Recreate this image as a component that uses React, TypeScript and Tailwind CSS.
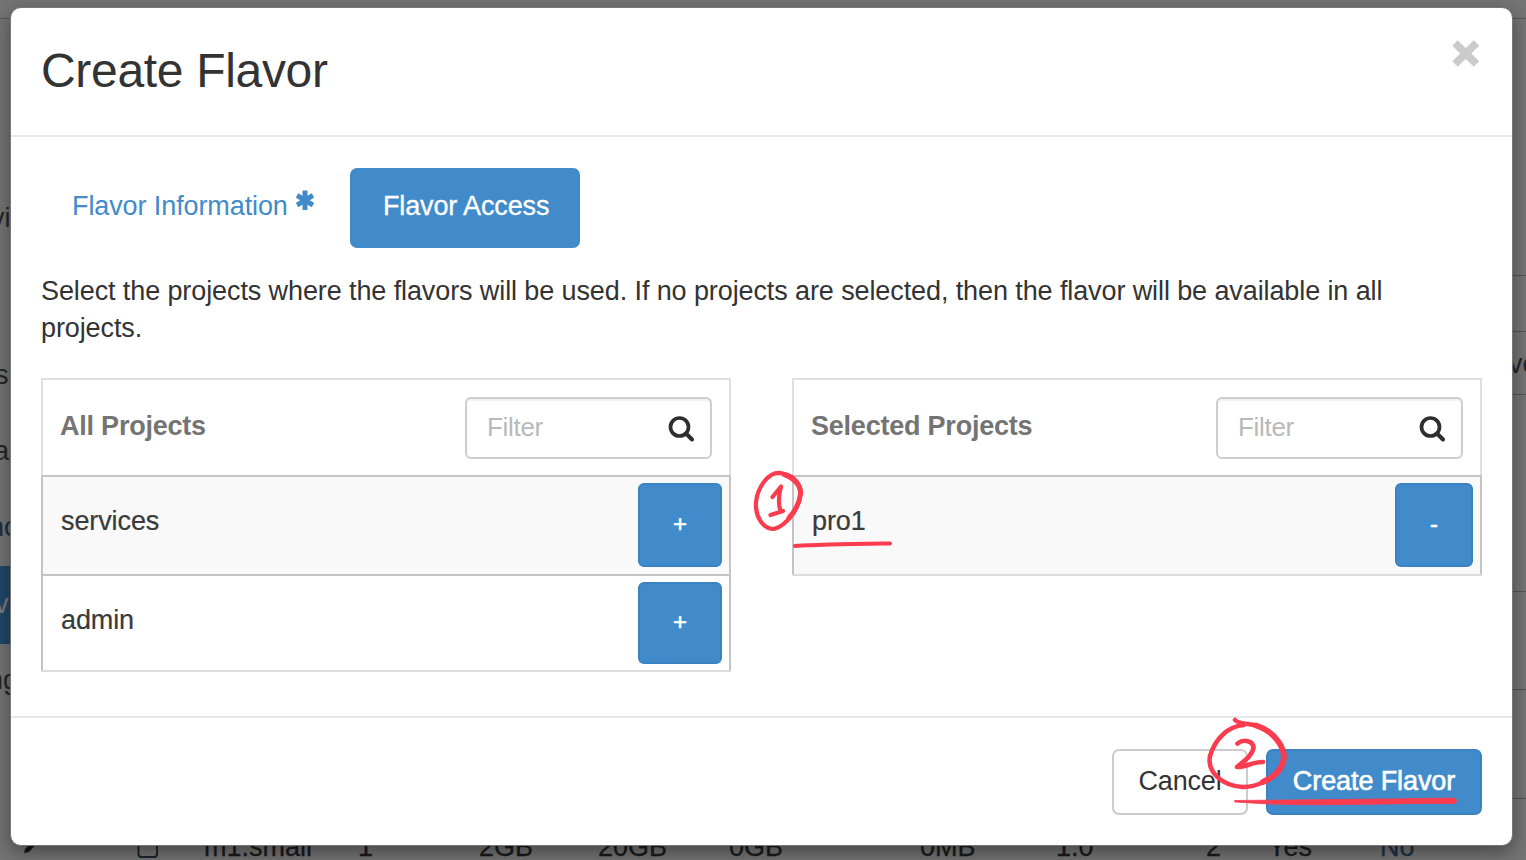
import { ReactNode } from "react";

const sideLabels = [
  { top: 200, left: -9, text: "vi", cls: "text-[#262626]" },
  { top: 357, left: -5, text: "s", cls: "text-[#262626]" },
  { top: 433, left: -6, text: "a", cls: "text-[#262626]" },
  { top: 509, left: -11, text: "nc", cls: "text-[#1c2f42]" },
  { top: 586, left: -5, text: "v", cls: "text-[#808080]" },
  { top: 662, left: -12, text: "ng", cls: "text-[#262626]" },
];

const tableCells = [
  { left: 204, text: "m1.small" },
  { left: 358, text: "1" },
  { left: 479, text: "2GB" },
  { left: 598, text: "20GB" },
  { left: 729, text: "0GB" },
  { left: 920, text: "0MB" },
  { left: 1056, text: "1.0" },
  { left: 1206, text: "2" },
  { left: 1268, text: "Yes" },
];

const ruleTops = [275, 331, 394, 591, 689, 798];

function Backdrop() {
  return (
    <div className="absolute inset-0 overflow-hidden bg-[#757575]" aria-hidden="true">
      <div className="absolute left-0 top-[18px] h-px w-full bg-[#595959]" />
      <div className="absolute left-0 top-[566px] h-[78px] w-3 bg-[#22486a]" />
      {ruleTops.map((top) => (
        <div key={top} className="absolute left-[1500px] h-px w-[26px] bg-[#555]" style={{ top }} />
      ))}
      {sideLabels.map((l) => (
        <div key={l.top} className={`absolute w-max text-[27px] leading-[37px] ${l.cls}`} style={{ top: l.top, left: l.left }}>
          {l.text}
        </div>
      ))}
      <div className="absolute left-[1509px] top-[346px] text-[27px] leading-[37px] text-[#262626]">vo</div>
      <svg className="absolute left-[20px] top-[840px]" width="150" height="20" viewBox="0 0 150 20">
        <path d="M4 13 L5 9 L14 0 L18 2 L9 12 Z" fill="#161616" />
        <rect x="118.500" y="-4" width="18.500" height="21" rx="3" fill="none" stroke="#1c2530" strokeWidth="2" />
      </svg>
      {tableCells.map((c) => (
        <div key={c.left} className="absolute top-[829px] text-[27px] leading-[37px] text-[#1b1b1b] [-webkit-text-stroke:0.3px]" style={{ left: c.left }}>
          {c.text}
        </div>
      ))}
      <div className="absolute left-[1380px] top-[829px] text-[27px] leading-[37px] text-[#1b3349] [-webkit-text-stroke:0.3px]">No</div>
    </div>
  );
}

function SearchIcon() {
  return (
    <svg className="mt-[2px]" width="26" height="26" viewBox="0 0 26 26" fill="none" stroke="#2e2e2e">
      <circle cx="11.500" cy="11" r="9" strokeWidth="3.700" />
      <path d="M18 17.500 L24 23.500" strokeWidth="4" strokeLinecap="round" />
    </svg>
  );
}

function FilterBox() {
  return (
    <div className="mr-[17px] flex h-[62px] w-[247px] items-center justify-between rounded-[6px] border-2 border-[#cecece] pl-5 pr-[16px] shadow-[inset_0_2px_2px_rgba(0,0,0,0.06)]">
      <span className="pb-px text-[26px] leading-[37px] tracking-[-0.300px] text-[#b9b9b9]">Filter</span>
      <SearchIcon />
    </div>
  );
}

function Row({ name, striped, sign }: { name: string; striped?: boolean; sign: string }) {
  return (
    <div
      className={`flex justify-between border-x-2 border-t-2 border-x-[#c4c4c4] border-t-[#c4c4c4] pl-[18px] pr-[7px] pt-[6px] ${
        striped ? "h-[99px] bg-[#f9f9f9]" : "h-[96px] bg-white"
      }`}
    >
      <span className="pt-[20px] text-[27px] leading-[37px] tracking-[-0.100px] text-[#3a3a3a] [-webkit-text-stroke:0.2px]">{name}</span>
      <button
        className={`flex items-center justify-center rounded-[6px] border-2 border-[#3a83c2] bg-[#428bca] pb-[3px] text-[24px] leading-none text-white [-webkit-text-stroke:0.5px] ${
          striped ? "h-[84px]" : "h-[82px]"
        } ${sign === "+" ? "w-[84px]" : "w-[78px]"}`}
      >
        {sign}
      </button>
    </div>
  );
}

function ProjectPanel({ title, children }: { title: string; children: ReactNode }) {
  return (
    <section className="w-[690px] border-b-2 border-b-[#dcdcdc]">
      <header className="flex h-[97px] items-center justify-between border-x-2 border-t-2 border-[#e0e0e0] pl-[17px]">
        <h2 className="pb-[2px] text-[27px] font-bold leading-[37px] tracking-[-0.220px] text-[#747474]">{title}</h2>
        <FilterBox />
      </header>
      {children}
    </section>
  );
}

function Annotations() {
  return (
    <svg className="pointer-events-none absolute inset-0" width="1526" height="860" viewBox="0 0 1526 860" fill="none" stroke="#fb3b4e" strokeLinecap="round" strokeLinejoin="round">
      <path d="M781 473 C769 471 758 486 756 502 C755 517 763 529 774 529 C786 526 799 509 800.500 494 C801 482 791 473 778 473" strokeWidth="4.200" />
      <path d="M784 474.500 C795 479 801 485 800.500 494 C799.500 503 795 511 789 518" strokeWidth="5" />
      <path d="M772.500 497 L781 486.500 C779 494 777.500 502 780.500 511 M770.500 515 L783 511" strokeWidth="4.200" />
      <path d="M795 546 C820 544.500 858 544 890 543.500" strokeWidth="4" />
      <path d="M1235 720 C1238 724 1248 723.500 1256 725.500 C1274 731 1289 750 1282 765 C1275 778 1258 787 1243 787 C1222 786 1207 772 1210 756 C1215 739 1228 726 1244 725" strokeWidth="4.500" />
      <path d="M1256 725.500 C1274 731 1289 750 1282 765 C1279 772 1272 778 1263 782" strokeWidth="5.800" />
      <path d="M1237.500 743.500 C1244 738.500 1253.500 741 1253.500 748 C1252 756 1244 761 1237 767 C1247 767 1253 761.500 1263 762" strokeWidth="4.600" />
      <path d="M1235 800.500 C1290 800 1400 799 1453 798 C1458 799 1458 803 1453 803.500 C1380 803 1320 806.500 1260 803.500 L1235 802 Z" fill="#fb3b4e" strokeWidth="0.800" />
    </svg>
  );
}

export default function App() {
  return (
    <main className="relative h-[860px] w-[1526px] overflow-hidden font-['Liberation_Sans',Arial,sans-serif]">
      <Backdrop />
      <div className="absolute left-[10px] top-[7px] flex h-[839px] w-[1503px] flex-col rounded-[11px] border border-[#777] bg-white shadow-[0_6px_20px_rgba(0,0,0,0.42)]">
        <header className="flex h-[129px] shrink-0 items-start justify-between border-b-2 border-[#e7e7e7] pl-[30px] pr-[31px]">
          <h1 className="pt-[35px] text-[48px] leading-[56px] tracking-[-0.320px] text-[#333]">Create Flavor</h1>
          <svg className="mt-[31px]" width="30" height="29" viewBox="0 0 30 29">
            <path d="M4 4 L25.500 25 M25.500 4 L4 25" stroke="#cbcbcb" strokeWidth="7.800" />
          </svg>
        </header>
        <div className="flex h-[581px] shrink-0 flex-col border-b-2 border-[#e7e7e7] pl-[30px] pr-[30px] pt-[31px]">
          <nav className="flex h-20 shrink-0">
            <div className="flex w-[309px] pl-[31px] pt-[20px] text-[27px] leading-[37px] tracking-[-0.100px] text-[#428bca]">
              <span>Flavor Information</span>
              <svg className="ml-[8px] mt-[2px]" width="18" height="21" viewBox="0 0 18 21" stroke="#428bca" strokeWidth="5">
                <path d="M9 0.500 V20 M1 5.500 L17 15 M17 5.500 L1 15" />
              </svg>
            </div>
            <div className="w-[230px] rounded-[7px] bg-[#428bca] pl-[33px] pt-[20px] text-[27px] leading-[37px] tracking-[-0.130px] text-white [-webkit-text-stroke:0.3px]">
              Flavor Access
            </div>
          </nav>
          <p className="whitespace-nowrap pt-[25px] text-[27px] leading-[37px] tracking-[-0.102px] text-[#333]">
            Select the projects where the flavors will be used. If no projects are selected, then the flavor will be available in all
            <br />
            projects.
          </p>
          <div className="flex items-start justify-between pt-[31px]">
            <ProjectPanel title="All Projects">
              <Row name="services" striped sign="+" />
              <Row name="admin" sign="+" />
            </ProjectPanel>
            <ProjectPanel title="Selected Projects">
              <Row name="pro1" striped sign="-" />
            </ProjectPanel>
          </div>
        </div>
        <footer className="flex items-start justify-end gap-[18px] pr-[30px] pt-[31px]">
          <button className="h-[66px] w-[136px] rounded-[7px] border-2 border-[#ccc] bg-white pb-[2px] text-[27px] tracking-[-0.150px] text-[#333]">Cancel</button>
          <button className="h-[66px] w-[216px] rounded-[7px] border-2 border-[#3a83c2] bg-[#428bca] pb-[2px] text-[27px] tracking-[-0.100px] text-white [-webkit-text-stroke:0.6px]">
            Create Flavor
          </button>
        </footer>
      </div>
      <Annotations />
    </main>
  );
}
